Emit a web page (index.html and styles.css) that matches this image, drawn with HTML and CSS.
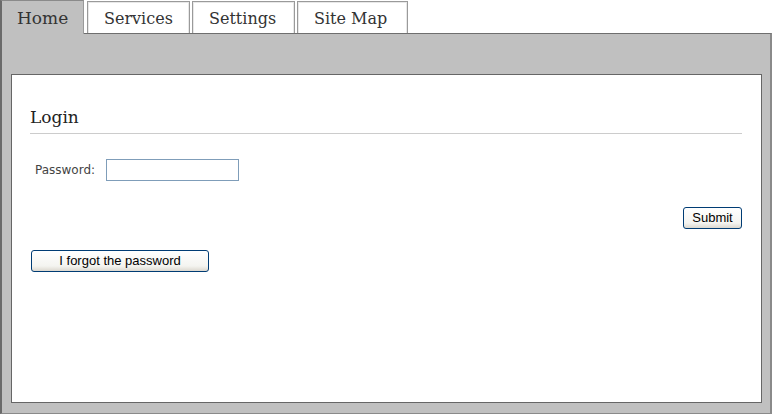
FILE: index.html
```html
<!DOCTYPE html>
<html>
<head>
<meta charset="utf-8">
<link rel="stylesheet" href="styles.css">
</head>
<body>
<div class="tabs">
  <div class="tab active">Home</div>
  <div class="tab services">Services</div>
  <div class="tab settings">Settings</div>
  <div class="tab sitemap">Site Map</div>
</div>
<div class="panel">
  <div class="box">
    <h2 class="title">Login</h2>
    <div class="row">
      <label class="label">Password:</label>
      <input class="input" type="password">
    </div>
    <div class="submit-row">
      <button class="btn submit">Submit</button>
    </div>
    <button class="btn forgot">I forgot the password</button>
  </div>
</div>
</body>
</html>
```
FILE: styles.css
```css
html, body {
  margin: 0;
  padding: 0;
  background: #fff;
  height: 414px;
  overflow: hidden;
}
body {
  display: flex;
  flex-direction: column;
  font-family: "DejaVu Serif", Georgia, serif;
}
.tabs {
  display: flex;
  align-items: flex-end;
  height: 33px;
  flex: none;
}
.tab {
  box-sizing: border-box;
  height: 32px;
  margin-left: 2px;
  padding: 0 0 0 16px;
  border: 1px solid #9a9a9a;
  border-bottom: none;
  background: #fff;
  box-shadow: inset 1px 1px 0 #e8e8e8, inset -1px 0 0 #e8e8e8;
  font-size: 16px;
  line-height: 34px;
  color: #333;
  white-space: nowrap;
  overflow: hidden;
}
.tab.active {
  margin-left: 0;
  width: 84px;
  padding: 0 0 0 15px;
  background: #c0c0c0;
  border-left: 2px solid #6a6a6a;
  border-top: 1px solid #8a8a8a;
  border-right: 1px solid #9a9a9a;
  box-shadow: none;
  line-height: 34px;
  position: relative;
  z-index: 1;
  margin-bottom: -1px;
  height: 34px;
  font-size: 17px;
}
.tab.services {
  margin-left: 3px;
  width: 103px;
}
.tab.settings {
  width: 103px;
}
.tab.sitemap {
  width: 111px;
}
.panel {
  flex: 1;
  background: #c0c0c0;
  border-top: 1px solid #6e6e6e;
  border-left: 2px solid #6a6a6a;
  border-right: 2px solid #8a8a8a;
  border-bottom: 1px solid #8a8a8a;
  padding: 40px 8px 10px 9px;
  display: flex;
}
.box {
  flex: 1;
  background: #fff;
  border: 1px solid #666;
  padding: 28px 19px 0 18px;
  font-family: "Liberation Sans", Arial, sans-serif;
}
.title {
  margin: 0;
  font-family: "DejaVu Serif", Georgia, serif;
  font-weight: normal;
  font-size: 17px;
  color: #222;
  border-bottom: 1px solid #ccc;
  padding-bottom: 2px;
  line-height: 28px;
}
.row {
  display: flex;
  align-items: center;
  margin-top: 25px;
  padding-left: 5px;
}
.label {
  font-family: "DejaVu Sans", Verdana, sans-serif;
  font-size: 12px;
  color: #444;
  margin-right: 11px;
}
.input {
  box-sizing: border-box;
  width: 133px;
  height: 22px;
  border: 1px solid #7f9db9;
  margin: 0;
  padding: 0;
}
.submit-row {
  display: flex;
  justify-content: flex-end;
  margin-top: 26px;
}
.btn {
  box-sizing: border-box;
  height: 22px;
  border: 1px solid #003c74;
  border-radius: 3px;
  background: linear-gradient(#ffffff, #f4f4f0 75%, #dcd8cf);
  font-family: "Liberation Sans", Arial, sans-serif;
  font-size: 13px;
  line-height: 18px;
  color: #000;
  padding: 0 0 1px;
  margin: 0;
}
.submit {
  width: 59px;
}
.forgot {
  display: block;
  width: 178px;
  margin-top: 21px;
  margin-left: 1px;
}
```
